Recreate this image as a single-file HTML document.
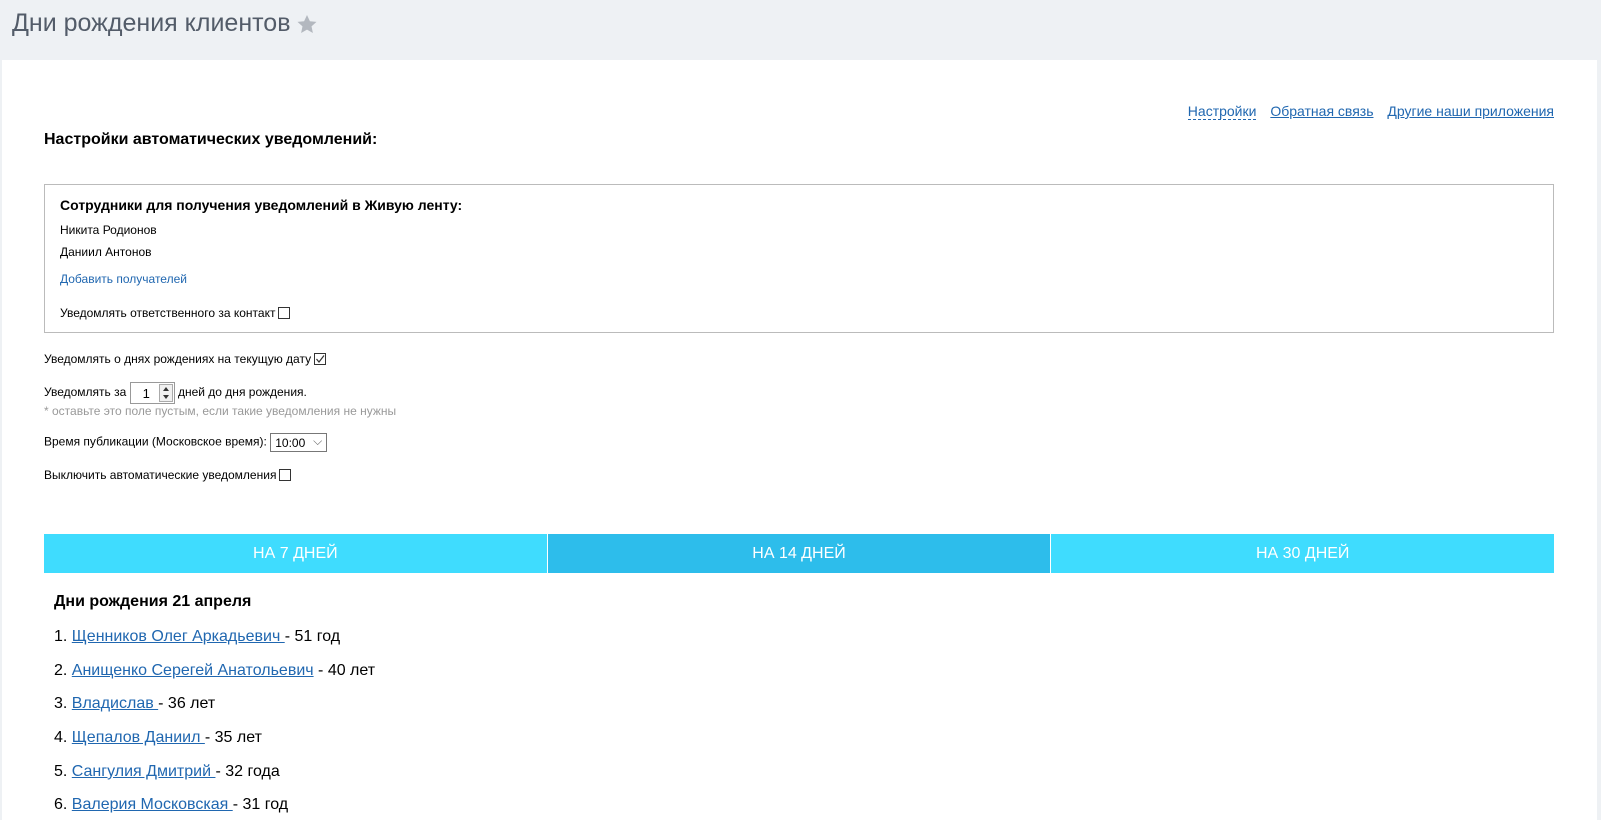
<!DOCTYPE html>
<html><head><meta charset="utf-8">
<style>
*{box-sizing:border-box}
body{margin:0;width:1601px;height:806px;overflow:hidden;background:#eef1f4;font-family:"Liberation Sans",Arial,sans-serif;color:#000;position:relative}
.title{position:absolute;left:12px;top:9px;font-size:25px;color:#535c69;font-weight:300}
.star{position:absolute;left:297px;top:15px}
.panel{position:absolute;left:2px;top:60px;width:1595px;height:760px;background:#fff}
a{color:#2067b0;text-decoration:underline}
.links{position:absolute;right:47px;top:103px;font-size:14px}
.links a{margin-left:10px}
.links a.dot{text-decoration:none;border-bottom:1px dashed #2067b0}
h3{position:absolute;left:44px;top:131px;margin:0;font-size:16px;font-weight:bold}
.box{position:absolute;left:44px;top:184px;width:1510px;height:149px;border:1px solid #bbb;font-size:12px}
.cb{display:inline-block;width:12px;height:12px;border:1px solid #333;vertical-align:-2px;margin-left:3px;background:#fff;position:relative}
.t{position:absolute;font-size:12px;white-space:nowrap}
.num{display:inline-block;width:45px;height:22px;border:1px solid #999;vertical-align:middle;position:relative;font-size:13px;padding:3px 0 0 12px}
.num i{position:absolute;right:1px;top:1px;width:14px;height:18px;border:1px solid #aaa;background:#f0f0f0}
.num i:before{content:"";position:absolute;left:3px;top:2px;border:3px solid transparent;border-bottom:4px solid #333;border-top:0}
.num i:after{content:"";position:absolute;left:3px;bottom:2px;border:3px solid transparent;border-top:4px solid #333;border-bottom:0}
.sel{display:inline-block;width:57px;height:19px;border:1px solid #777;vertical-align:middle;font-size:12px;padding:2px 0 0 4px;position:relative}
.tabs{position:absolute;left:44px;top:534px;width:1510px;height:39px;display:flex}
.tabs div{flex:1;background:#3fdcfe;color:#fff;font-size:16px;text-align:center;line-height:39px}
.tabs div.a{background:#2dbdeb;border-left:1px solid #fff;border-right:1px solid #fff}
.bd{position:absolute;left:54px;top:593px;font-size:16px;font-weight:bold}
.li{position:absolute;left:54px;font-size:16px}
</style></head><body>
<div class="title">Дни рождения клиентов</div>
<svg class="star" width="20" height="19" viewBox="0 0 20 19"><path d="M10 0l2.9 6.2 6.6.7-5 4.5 1.4 6.6L10 14.6 4.1 18l1.4-6.6-5-4.5 6.6-.7z" fill="#b3b8bf"/></svg>
<div class="panel"></div>
<div class="links"><a class="dot">Настройки</a> <a>Обратная связь</a> <a>Другие наши приложения</a></div>
<h3>Настройки автоматических уведомлений:</h3>
<div class="box">
 <div class="t" style="left:15px;top:12px;font-size:14px;font-weight:bold">Сотрудники для получения уведомлений в Живую ленту:</div>
 <div class="t" style="left:15px;top:38px">Никита Родионов</div>
 <div class="t" style="left:15px;top:60px">Даниил Антонов</div>
 <div class="t" style="left:15px;top:87px"><a style="text-decoration:none">Добавить получателей</a></div>
 <div class="t" style="left:15px;top:121px">Уведомлять ответственного за контакт<span class="cb"></span></div>
</div>
<div class="t" style="left:44px;top:352px">Уведомлять о днях рождениях на текущую дату<span class="cb"><svg width="10" height="10" style="position:absolute;left:0;top:0"><path d="M1.5 5l2.5 3L9 1.5" stroke="#333" fill="none" stroke-width="1.2"/></svg></span></div>
<div class="t" style="left:44px;top:382px">Уведомлять за <span class="num">1<i></i></span> дней до дня рождения.</div>
<div class="t" style="left:44px;top:404px;color:#999">* оставьте это поле пустым, если такие уведомления не нужны</div>
<div class="t" style="left:44px;top:433px">Время публикации (Московское время): <span class="sel">10:00 <span style="position:absolute;right:4px;top:0;color:#666">⌵</span></span></div>
<div class="t" style="left:44px;top:468px">Выключить автоматические уведомления<span class="cb"></span></div>
<div class="tabs"><div>НА 7 ДНЕЙ</div><div class="a">НА 14 ДНЕЙ</div><div>НА 30 ДНЕЙ</div></div>
<div class="bd">Дни рождения 21 апреля</div>
<div class="li" style="top:628px">1. <a>Щенников Олег Аркадьевич </a> - 51 год</div>
<div class="li" style="top:662px">2. <a>Анищенко Серегей Анатольевич</a> - 40 лет</div>
<div class="li" style="top:695px">3. <a>Владислав </a> - 36 лет</div>
<div class="li" style="top:729px">4. <a>Щепалов Даниил </a> - 35 лет</div>
<div class="li" style="top:763px">5. <a>Сангулия Дмитрий </a> - 32 года</div>
<div class="li" style="top:796px">6. <a>Валерия Московская </a> - 31 год</div>
</body></html>
